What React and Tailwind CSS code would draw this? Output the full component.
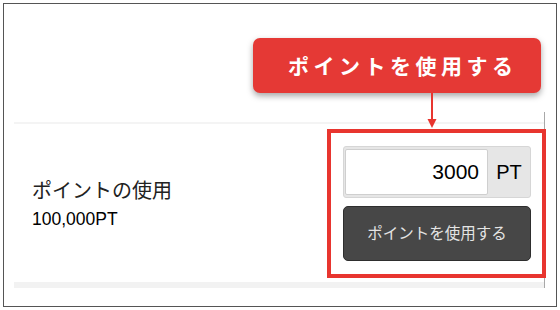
import React from "react";

const jp = { fontFamily: '"Noto Sans CJK JP", "Noto Sans", sans-serif' };
const latin = { fontFamily: '"Liberation Sans", Arial, sans-serif' };

const Arrow = () => (
  <svg width="10" height="36" viewBox="0 0 10 36" className="absolute left-[423px] top-[89px]">
    <line x1="5" y1="0" x2="5" y2="27" stroke="#e8352f" strokeWidth="2" />
    <path d="M0.5 26 L9.5 26 L5 35 Z" fill="#e8352f" />
  </svg>
);

const PointForm = () => (
  <div className="relative flex w-[188px] flex-col gap-[8px]">
    <div className="flex h-[52px] rounded-[3px] border border-[#d6d6d6] bg-[#e6e6e6]">
      <div className="my-[2px] ml-[1px] flex flex-1 items-center justify-end rounded-[2px] border border-[#cfcfcf] bg-white pr-[8px]">
        <input
          readOnly
          value="3000"
          className="w-full bg-transparent text-right text-[21px] text-black outline-none"
          style={latin}
        />
      </div>
      <div className="flex w-[42px] items-center justify-center text-[20px] text-black" style={latin}>
        PT
      </div>
    </div>
    <button
      className="flex h-[55px] items-center justify-center rounded-[5px] border border-[#2e2e2e] bg-[#474747] text-[15.5px] text-[#e4e4e4]"
      style={jp}
    >
      ポイントを使用する
    </button>
    {/* annotation frame */}
    <div className="absolute -top-[17px] -bottom-[17px] -left-[16px] -right-[15px] border-4 border-[#e8352f]" />
  </div>
);

export default function App() {
  return (
    <div className="h-[310px] w-[560px] bg-white pt-[3px] pl-[3px]">
      <div className="relative h-[304px] w-[554px] border border-[#555]">
        <div className="flex justify-end pt-[34px] pr-[15px]">
          <div
            className="flex h-[55px] w-[288px] items-center rounded-[7px] bg-[#e53935] pl-[35px] text-[21px] font-bold tracking-[4.5px] text-white shadow-[0_3px_6px_rgba(0,0,0,0.35)]"
            style={jp}
          >
            ポイントを使用する
          </div>
        </div>

        <div className="mt-[19px] ml-[10px] w-[531px] border-r border-[#a8a8a8] pt-[10px]">
          <div className="h-[2px] bg-[#f4f4f4]" />
          <div className="flex h-[158px] items-center justify-between pr-[13px] pl-[18px]">
            <div className="text-[#222]">
              <div className="text-[20px] leading-[24px]" style={jp}>
                ポイントの使用
              </div>
              <div className="mt-[7px] text-[17.5px] leading-[20px] text-black" style={latin}>
                100,000PT
              </div>
            </div>
            <PointForm />
          </div>
          <div className="h-[6px] bg-[#f2f2f2]" />
        </div>

        <Arrow />
      </div>
    </div>
  );
}
